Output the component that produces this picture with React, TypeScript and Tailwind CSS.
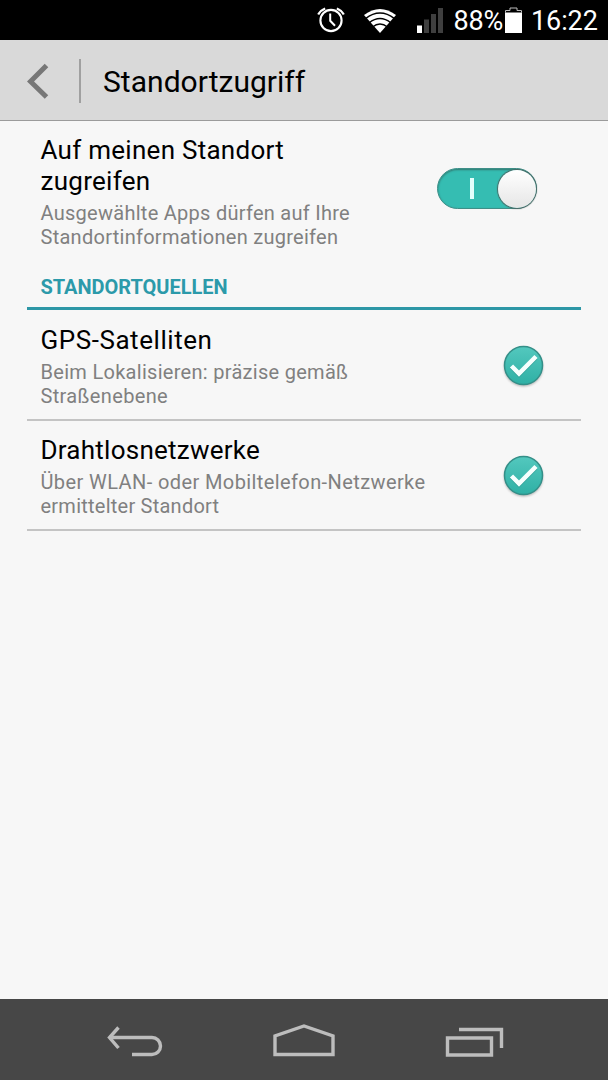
import type { ReactNode } from 'react'

const sources = [
  {
    title: 'GPS-Satelliten',
    summary: ['Beim Lokalisieren: präzise gemäß', 'Straßenebene'],
    rowClass: 'h-[111px] pt-[15px]',
    titleSpacing: 'tracking-[0.55px]',
    summarySpacing: ['tracking-[0.29px]', 'tracking-[0.35px]'],
  },
  {
    title: 'Drahtlosnetzwerke',
    summary: ['Über WLAN- oder Mobiltelefon-Netzwerke', 'ermittelter Standort'],
    rowClass: 'h-[110px] pt-[14px]',
    titleSpacing: 'tracking-[0.25px]',
    summarySpacing: ['tracking-[0.4px]', 'tracking-[0.24px]'],
  },
]

function AlarmIcon() {
  return (
    <svg width="28" height="28" viewBox="0 0 28 28" fill="none" stroke="#fff">
      <circle cx="14" cy="14.5" r="10.6" strokeWidth="2.1" />
      <path d="M13.2 7.5v7.3l4.800 5" strokeWidth="2" />
      <path d="M1.200 8.500a14 14 0 0 1 7-6M26.800 8.500a14 14 0 0 0-7-6" strokeWidth="2.300" />
    </svg>
  )
}

function WifiIcon() {
  return (
    <svg width="32" height="24" viewBox="0 0 32 24" fill="none">
      <path d="M0 6Q16-6 32 6L16 24Z" fill="#fff" />
      <path d="M1.500 9.600Q16-1.600 30.500 9.600M5 14Q16 5.200 27 14M8.500 18Q16 12 23.500 18" stroke="#000" strokeWidth="1.500" />
    </svg>
  )
}

function SignalIcon() {
  return (
    <svg width="26" height="26" viewBox="0 0 26 26" fill="#3f3f3f">
      <path d="M0 17.500h5V25H0z" fill="#fff" />
      <path d="M7 11.500h5V25H7zM14 6h5v19h-5zM21 0h5v25h-5z" />
    </svg>
  )
}

function BatteryIcon() {
  return (
    <svg width="17" height="27" viewBox="0 0 17 27" fill="none">
      <path d="M.5 5.500V3.500H5V1h7v2.500h4.500v2" stroke="#bbb" />
      <path d="M0 5.500h17V26H0z" fill="#fff" />
    </svg>
  )
}

function StatusBar() {
  return (
    <div className="flex h-10 items-start bg-black text-white">
      <div className="ml-[317px] mt-1.5 w-[28px]"><AlarmIcon /></div>
      <div className="ml-[19px] mt-[9px] w-[32px]"><WifiIcon /></div>
      <div className="ml-[21px] mt-2 w-[26px]"><SignalIcon /></div>
      <span className="ml-[10.5px] mt-[5px] w-[51.5px] whitespace-nowrap text-[27px] leading-8 tracking-[-0.2px]">88%</span>
      <div className="mt-[7px] w-[17px]"><BatteryIcon /></div>
      <span className="ml-[9px] mt-[5px] whitespace-nowrap text-[27px] leading-8 tracking-[-0.1px]">16:22</span>
    </div>
  )
}

function Header() {
  return (
    <header className="flex h-[81px] items-center border-b border-[#9b9b9b] bg-[#d9d9d9]">
      <svg className="ml-[27px] mt-0.5" width="22" height="36" viewBox="0 0 22 36" fill="none">
        <path d="M19.500 2.500 3.500 18.500l16 15.500" stroke="#777" strokeWidth="5" />
      </svg>
      <div className="ml-[30px] mt-0.5 h-11 w-[2px] bg-[#a0a0a0]" />
      <h1 className="ml-[22px] mt-1 text-[30px] leading-9 tracking-[0.03px] text-black">Standortzugriff</h1>
    </header>
  )
}

function Toggle() {
  return (
    <div className="flex h-[41px] w-[100px] items-center justify-between rounded-full border border-[#3f8f88] bg-[#35bdb2] shadow-[inset_0_1px_2px_#31776f]">
      <div className="ml-8 h-[21px] w-1 bg-[#e2fffc]" />
      <div className="h-[38px] w-[38px] rounded-full bg-linear-to-b from-white to-[#e6e6e6] shadow-[0_0_1px_1px_#4b6764]" />
    </div>
  )
}

function CheckBadge() {
  return (
    <svg width="44" height="46" viewBox="0 0 44 46" fill="none">
      <defs>
        <linearGradient id="badge" x1="0" y1="0" x2="0" y2="1">
          <stop stopColor="#53c8be" />
          <stop offset="1" stopColor="#2fb0a5" />
        </linearGradient>
        <filter id="soft" x="-20%" y="-20%" width="140%" height="140%">
          <feGaussianBlur stdDeviation="1" />
        </filter>
      </defs>
      <circle cx="22.500" cy="24" r="19.500" fill="#999" opacity="0.7" filter="url(#soft)" />
      <circle cx="22.500" cy="22.500" r="19" fill="url(#badge)" stroke="#348f88" strokeWidth="1.500" />
      <path d="m10.500 24 7.500 7.500 17-17" stroke="#268b82" strokeWidth="4.500" opacity="0.5" />
      <path d="m10.500 23 7.500 7.500 17-17" stroke="#f6fffe" strokeWidth="4.500" />
    </svg>
  )
}

function Summary({ children }: { children: ReactNode }) {
  return <p className="mt-1 whitespace-nowrap text-[20px] leading-6 tracking-[0.27px] text-[#808080]">{children}</p>
}

function NavBar() {
  return (
    <nav className="flex h-[81px] items-start bg-[#474747]">
      <svg className="ml-[106px] mt-[27px]" width="58" height="32" viewBox="0 0 58 32" fill="none" stroke="#bdbdbd" strokeWidth="3.400">
        <path d="M3 11.500h43a8.500 8.500 0 0 1 0 17H26" />
        <path d="M12.500 1.500 3.500 11.500l9 10.500" />
      </svg>
      <svg className="ml-[109px] mt-[24px]" width="62" height="35" viewBox="0 0 62 35" fill="none" stroke="#bdbdbd" strokeWidth="3.400">
        <path d="M2 31.500V13L31 3l29 10v18.500z" />
      </svg>
      <svg className="ml-[110px] mt-[27px]" width="60" height="32" viewBox="0 0 60 32" fill="none" stroke="#bdbdbd" strokeWidth="3.400">
        <path d="M2.500 12h44v17h-44zM14 3.500h42.500V22" />
      </svg>
    </nav>
  )
}

export default function App() {
  return (
    <div className="flex h-[1080px] w-[608px] flex-col overflow-hidden bg-[#f7f7f7] font-['Roboto',sans-serif]">
      <StatusBar />
      <Header />

      <main className="flex-1 px-[27px]">
        <div className="flex h-[143px] items-start justify-between pl-[13.5px] pt-[14px]">
          <div>
            <h2 className="text-[26px] leading-[31px] tracking-[0.27px] text-black">
              Auf meinen Standort
              <br />
              zugreifen
            </h2>
            <Summary>
              Ausgewählte Apps dürfen auf Ihre
              <br />
              Standortinformationen zugreifen
            </Summary>
          </div>
          <div className="mr-[44.5px] mt-[33px]"><Toggle /></div>
        </div>

        <h3 className="flex h-[46px] items-start border-b-[3px] border-[#2d97a6] pl-[13.5px] pt-[11px] text-[20px] font-bold leading-6 tracking-[-0.03px] text-[#2c9aaa]">
          STANDORTQUELLEN
        </h3>

        {sources.map((source) => (
          <section
            key={source.title}
            className={`flex items-start justify-between border-b-2 border-[#c4c4c4] pl-[13.5px] ${source.rowClass}`}
          >
            <div>
              <h2 className={`text-[26px] leading-[31px] text-black ${source.titleSpacing}`}>{source.title}</h2>
              <Summary>
                <span className={source.summarySpacing[0]}>{source.summary[0]}</span>
                <br />
                <span className={source.summarySpacing[1]}>{source.summary[1]}</span>
              </Summary>
            </div>
            <div className="mr-9 mt-[18px]"><CheckBadge /></div>
          </section>
        ))}
      </main>

      <NavBar />
    </div>
  )
}
